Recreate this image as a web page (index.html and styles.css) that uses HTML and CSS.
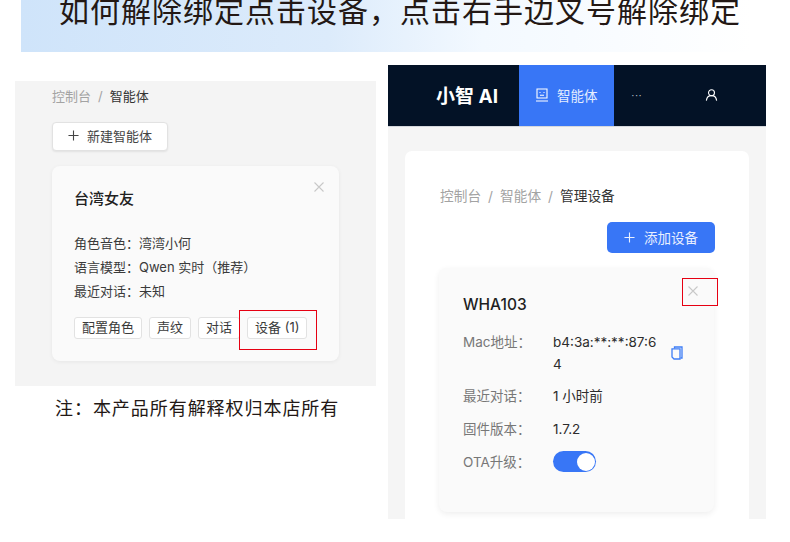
FILE: index.html
```html
<!DOCTYPE html>
<html lang="zh">
<head>
<meta charset="utf-8">
<title>如何解除绑定</title>
<link rel="stylesheet" href="styles.css">
</head>
<body>
<header class="banner"><h1 class="banner-title">如何解除绑定点击设备，点击右手边叉号解除绑定</h1></header>
<main class="columns">
  <section class="left">
    <div class="shot-left">
      <nav class="crumbs crumbs-small"><span>控制台</span><i>/</i><b>智能体</b></nav>
      <button class="new-btn"><svg class="plus" viewBox="0 0 12 12"><path d="M6 .5v11M.5 6h11"/></svg>新建智能体</button>
      <article class="agent">
        <svg class="close close-agent" viewBox="0 0 10 10"><path d="M.5.5l9 9M9.500.5l-9 9"/></svg>
        <h2>台湾女友</h2>
        <p>角色音色：湾湾小何</p>
        <p>语言模型：Qwen 实时（推荐）</p>
        <p>最近对话：未知</p>
        <div class="tags">
          <span class="tag">配置角色</span><span class="tag">声纹</span><span class="tag">对话</span><span class="tag">设备 (1)</span>
          <span class="mark mark-device"></span>
        </div>
      </article>
    </div>
    <p class="note">注：本产品所有解释权归本店所有</p>
  </section>
  <section class="right">
    <div class="topbar">
      <div class="logo">小智 AI</div>
      <div class="tab">
        <svg class="robot" viewBox="0 0 14 14"><path d="M2 1h10v9H2zM1 13h12M4.500 4.500h1M8.500 4.500h1M5 7.200h4"/></svg>
        <span>智能体</span>
      </div>
      <div class="more">···</div>
      <svg class="user" viewBox="0 0 14 14"><circle cx="7" cy="4.500" r="3.200"/><path d="M1.500 13c.4-3.500 2.400-5.300 5.500-5.300s5.100 1.800 5.500 5.300"/></svg>
    </div>
    <div class="content">
      <div class="panel">
        <nav class="crumbs crumbs-large"><span>控制台</span><i>/</i><span>智能体</span><i>/</i><b>管理设备</b></nav>
        <div class="add-row"><button class="add-btn"><svg class="plus" viewBox="0 0 12 12"><path d="M6 .5v11M.5 6h11"/></svg><span>添加设备</span></button></div>
        <article class="device">
          <svg class="close close-device" viewBox="0 0 10 10"><path d="M.5.5l9 9M9.500.5l-9 9"/></svg>
          <span class="mark mark-close"></span>
          <h2>WHA103</h2>
          <dl class="info">
            <dt>Mac地址：</dt>
            <dd class="mac">b4:3a:**:**:87:64
              <svg class="copy" viewBox="0 0 12 14"><path d="M3.500 2.500V1h7.500v11H9.500"/><path d="M1 2.800h8v10.200H3L1 11z"/></svg>
            </dd>
            <dt>最近对话：</dt><dd>1 小时前</dd>
            <dt>固件版本：</dt><dd>1.7.2</dd>
            <dt>OTA升级：</dt><dd><span class="switch"><span class="knob"></span></span></dd>
          </dl>
        </article>
      </div>
    </div>
  </section>
</main>
</body>
</html>
```
FILE: styles.css
```css
* { box-sizing: border-box; }
html, body { margin: 0; padding: 0; }
body {
  width: 790px;
  height: 542px;
  overflow: hidden;
  background: #fff;
  font-family: Inter, "Noto Sans CJK SC", sans-serif;
  color: #2c2c2c;
}
h1, h2, p, dl, dd { margin: 0; }
i { font-style: normal; }
button { font-family: inherit; cursor: pointer; }

.banner {
  height: 52px;
  margin-left: 21px;
  padding-left: 38px;
  background: linear-gradient(90deg, #cfe4fa 0%, #dcebfb 40%, #f3f9ff 60%, #fff 95%);
  overflow: hidden;
}
.banner-title {
  margin-top: -9px;
  font-size: 30px;
  line-height: 40px;
  font-weight: 400;
  letter-spacing: 1px;
  color: #231815;
  white-space: nowrap;
}

.columns { display: flex; margin-left: 15px; }
.left { width: 361px; margin-top: 29px; margin-right: 12px; }
.right { width: 378px; margin-top: 13px; }

.shot-left {
  height: 305px;
  padding: 6px 37px 0;
  background: #f4f4f4;
}
.crumbs { display: flex; color: #a3a3a3; }
.crumbs b { font-weight: 400; color: #333; }
.crumbs-small { font-size: 13px; line-height: 18px; gap: 7px; }
.crumbs-large { margin-left: 1px; font-size: 13.700px; line-height: 20px; gap: 7px; }

.new-btn {
  display: flex;
  align-items: center;
  width: 116px;
  height: 29px;
  margin-top: 17px;
  padding: 0 0 2px 15px;
  border: 1px solid #e2e2e2;
  border-radius: 4px;
  background: #fff;
  color: #444;
  font-size: 13px;
  box-shadow: 0 1px 2px rgba(0,0,0,.08);
}
.plus { width: 11px; height: 11px; margin-right: 8px; fill: none; stroke: currentColor; stroke-width: 1.200; }

.agent {
  position: relative;
  width: 287px;
  height: 195px;
  margin-top: 15px;
  padding: 22px 22px 0;
  border-radius: 8px;
  background: #fafafa;
  box-shadow: 0 1px 4px rgba(0,0,0,.06);
}
.agent h2 { margin-bottom: 21px; font-size: 15px; line-height: 22px; font-weight: 500; color: #222; }
.agent p { font-size: 13px; line-height: 24px; color: #3a3a3a; }

.close { position: absolute; fill: none; stroke: #c8c8c8; stroke-width: 1.100; }
.close-agent { top: 16px; right: 15px; width: 10px; height: 10px; }
.close-device { top: 18px; right: 16px; width: 10px; height: 10px; }

.tags { position: relative; display: flex; gap: 7px; margin-top: 14px; }
.tag {
  display: block;
  height: 22px;
  padding: 0 7px;
  border: 1px solid #e2e2e2;
  border-radius: 3px;
  background: #fff;
  font-size: 13px;
  line-height: 19px;
  color: #3a3a3a;
  white-space: nowrap;
}
.mark { position: absolute; border: 1px solid #e60012; }
.mark-device { top: -7px; left: 165px; width: 78px; height: 40px; }
.mark-close { top: 10px; right: -4px; width: 36px; height: 28px; }

.note {
  margin: 11px 0 0 40px;
  font-size: 18px;
  line-height: 24px;
  letter-spacing: .95px;
  color: #231815;
  white-space: nowrap;
}

.topbar { display: flex; align-items: center; height: 61px; background: #031226; color: #fff; }
.logo { width: 131px; padding: 0 0 2px 48px; font-size: 19px; font-weight: 700; white-space: nowrap; }
.tab {
  display: flex;
  align-items: center;
  gap: 8px;
  width: 95px;
  height: 61px;
  padding: 0 0 2px 16px;
  background: #3876f6;
  font-size: 13.500px;
  color: #e4edff;
}
.robot { width: 14px; height: 14px; fill: none; stroke: #fff; stroke-width: 1.100; }
.more { width: 91px; padding: 0 0 2px 17px; font-family: "Liberation Sans", sans-serif; font-size: 11px; color: #b9c0ca; }
.user { width: 13px; height: 14px; margin-top: -2px; fill: none; stroke: #fff; stroke-width: 1.200; }

.content { height: 393px; padding: 24px 17px 0; background: #f5f5f5; border-top: 1px solid #d5d8dd; overflow: hidden; }
.panel {
  height: 369px;
  padding: 35px 34px 0;
  border-radius: 7px 7px 0 0;
  background: #fff;
}
.add-row { display: flex; justify-content: flex-end; margin: 16px 0 0; }
.add-btn {
  display: flex;
  align-items: center;
  width: 108px;
  height: 31px;
  padding: 0 0 1px 17px;
  border: 0;
  border-radius: 5px;
  background: #3876f6;
  color: #e8efff;
  font-size: 13.500px;
}
.add-btn .plus { margin-right: 9px; }

.device {
  position: relative;
  width: 275px;
  height: 244px;
  margin-top: 15px;
  padding: 26px 24px 0;
  border-radius: 8px;
  background: #fafafa;
  box-shadow: 0 2px 6px rgba(0,0,0,.07);
}
.device h2 { font-size: 15.500px; line-height: 22px; font-weight: 500; color: #1f1f1f; }
.info {
  display: grid;
  grid-template-columns: 90px 105px;
  grid-auto-rows: auto;
  row-gap: 11px;
  margin-top: 15px;
  font-size: 13.500px;
  line-height: 22px;
}
.info dt { color: #777; white-space: nowrap; }
.info dd { color: #2c2c2c; }
.mac { position: relative; margin-bottom: -1px; word-break: break-all; }
.copy {
  position: absolute;
  top: 15px;
  right: -25px;
  width: 12px;
  height: 14px;
  fill: none;
  stroke: #3e7df6;
  stroke-width: 1.300;
}
.switch {
  display: flex;
  align-items: center;
  justify-content: flex-end;
  width: 43px;
  height: 21px;
  padding: 0 1px;
  border-radius: 11px;
  background: #3876f6;
}
.knob { width: 18px; height: 18px; border-radius: 50%; background: #fff; }
```
